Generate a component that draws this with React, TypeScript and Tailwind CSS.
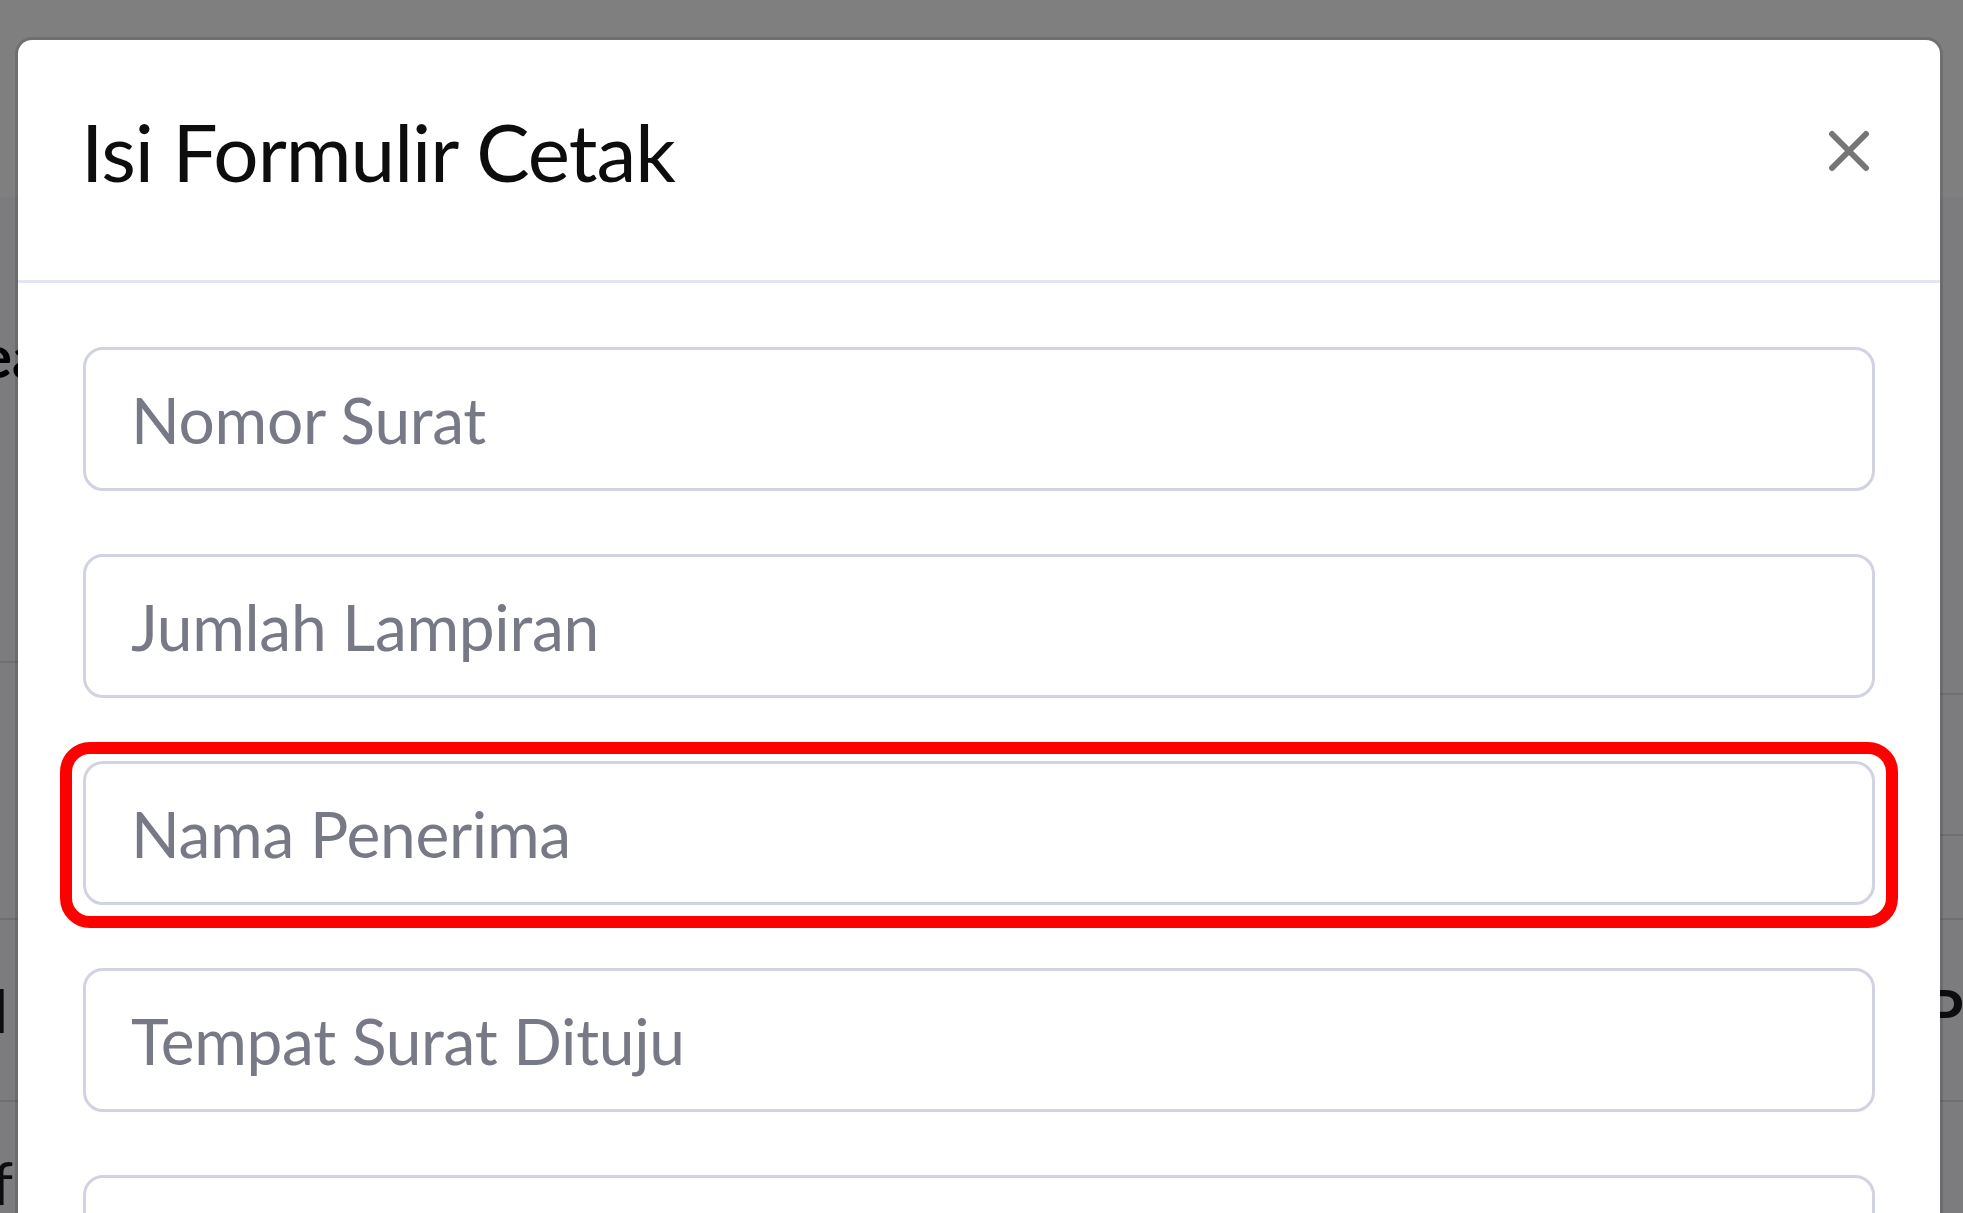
import React from 'react';

const fields = ['Nomor Surat', 'Jumlah Lampiran', 'Nama Penerima', 'Tempat Surat Dituju', 'Perihal'];

export default function App() {
  return (
    <div className="relative w-[1963px] h-[1213px] overflow-hidden bg-[#f8f9fc] font-['Lato','Noto_Sans',sans-serif]">
      {/* page behind the modal */}
      <div className="h-[197px] bg-white" />
      <div className="flex">
        <div className="w-[980px] flex flex-col">
          <div className="h-[466px] border-b-[2px] border-[#dddfeb] pt-[128px]">
            <div className="h-[60px] flex items-center text-[60px] font-bold text-black">
              <span className="-ml-[20px]">ea</span>
            </div>
          </div>
          <div className="h-[257px] border-b-[2px] border-[#dddfeb]" />
          <div className="h-[182px] border-b-[2px] border-[#dddfeb] flex items-center text-[60px] font-bold text-[#1a1a1a]">
            <span className="-ml-[38px]">al</span>
          </div>
          <div className="h-[160px] flex items-center text-[60px] text-[#1a1a1a]">
            <span className="-ml-[8px]">f</span>
          </div>
        </div>
        <div className="flex-1 flex flex-col">
          <div className="h-[498px] border-b-[2px] border-[#dddfeb]" />
          <div className="h-[141px] border-b-[2px] border-[#dddfeb]" />
          <div className="h-[84px] border-b-[2px] border-[#dddfeb]" />
          <div className="h-[182px] border-b-[2px] border-[#dddfeb] flex items-center justify-end text-[60px] font-bold text-[#1a1a1a]">
            <span className="-mr-[30px]">Pa</span>
          </div>
        </div>
      </div>

      {/* backdrop */}
      <div className="absolute inset-0 bg-black/50" />

      {/* modal */}
      <div className="absolute left-[18px] top-[40px] w-[1922px] h-[1300px] bg-white rounded-[14px] shadow-[0_0_0_3px_rgba(0,0,0,0.12)]">
        <div className="h-[243px] flex items-center justify-between pl-[63px] pr-[70px] pb-[18px] border-b-[3px] border-[#e3e6f0]">
          <h5 className="text-[80px] leading-[1.2] tracking-[-1px] text-[#0d0d0d] font-normal">Isi Formulir Cetak</h5>
          <button className="w-[42px] h-[42px] flex items-center justify-center">
            <svg width="42" height="42" viewBox="0 0 42 42">
              <path d="M4 4 L38 38 M38 4 L4 38" stroke="#767676" strokeWidth="6" strokeLinecap="round" />
            </svg>
          </button>
        </div>
        <div className="px-[65px] pt-[64px] flex flex-col gap-[63px]">
          {fields.map((f, i) => (
            <div key={f} className="relative">
              <input
                type="text"
                placeholder={f}
                className="w-full h-[144px] border-[3px] border-[#d1d3e2] rounded-[20px] pl-[45px] text-[64px] tracking-[-0.3px] text-[#6e707e] placeholder:text-[#777987] outline-none bg-white"
              />
              {i === 2 && (
                <div className="absolute -left-[23px] -right-[23px] -top-[19px] -bottom-[23px] border-[12px] border-[#ff0000] rounded-[30px] pointer-events-none" />
              )}
            </div>
          ))}
        </div>
      </div>
    </div>
  );
}
